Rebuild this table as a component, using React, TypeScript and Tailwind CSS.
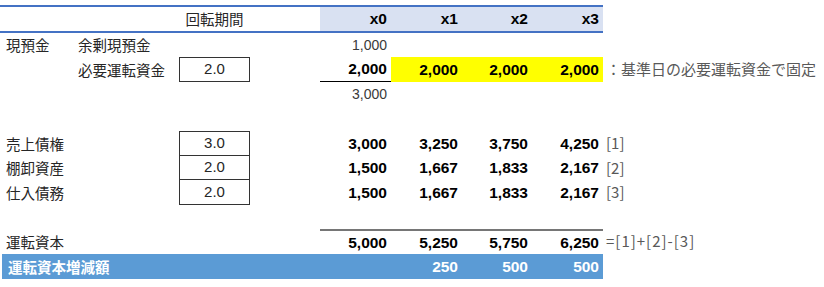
import type { ReactNode } from 'react';

const GRID =
  'grid grid-cols-[72px_107px_71px_70px_71px_71px_70px_71px_1fr] w-[824px]';
const JP = "font-['Noto_Sans_CJK_JP',sans-serif]";
const NUM = "font-['Liberation_Sans','Noto_Sans_CJK_JP',sans-serif]";

type Cell = ReactNode;

function Label({ children, white }: { children?: ReactNode; white?: boolean }) {
  return (
    <div
      className={`${JP} flex items-center pl-[6px] whitespace-nowrap text-[14.5px] ${
        white ? 'text-white font-bold' : 'text-[#262626]'
      }`}
    >
      {children}
    </div>
  );
}

function Num({
  children,
  bold = true,
  className = '',
}: {
  children?: ReactNode;
  bold?: boolean;
  className?: string;
}) {
  return (
    <div
      className={`${NUM} flex items-center justify-end pr-[4px] ${
        bold ? 'font-bold text-[15.5px] text-black' : 'text-[14px] text-[#3a3a3a]'
      } ${className}`}
    >
      {children}
    </div>
  );
}

function Box({ children, first }: { children: ReactNode; first?: boolean }) {
  return (
    <div
      className={`${NUM} flex items-center justify-center border-x border-b border-[#333] text-[15px] text-[#262626] ${
        first ? 'border-t' : ''
      }`}
    >
      {children}
    </div>
  );
}

function Note({ children, wide }: { children?: ReactNode; wide?: boolean }) {
  return (
    <div
      className={`${JP} flex items-center pl-[3px] whitespace-nowrap text-[15px] text-[#595959] ${
        wide ? 'tracking-[1px]' : ''
      }`}
    >
      {children}
    </div>
  );
}

function Row({ h, cells, className = '' }: { h: string; cells: Cell[]; className?: string }) {
  return (
    <div className={`${GRID} ${h} ${className}`}>
      {cells.map((c, i) => (
        <div key={i} className="contents">
          {c ?? <div />}
        </div>
      ))}
    </div>
  );
}

const ITEMS = [
  { label: '売上債権', turn: '3.0', vals: ['3,000', '3,250', '3,750', '4,250'], note: '[1]' },
  { label: '棚卸資産', turn: '2.0', vals: ['1,500', '1,667', '1,833', '2,167'], note: '[2]' },
  { label: '仕入債務', turn: '2.0', vals: ['1,500', '1,667', '1,833', '2,167'], note: '[3]' },
];

export default function App() {
  return (
    <div className="w-[824px] h-[287px] bg-white pt-[5px] overflow-hidden">
      {/* header */}
      <div className="w-[603px] border-y-2 border-[#4472c4]">
        <div className="grid grid-cols-[72px_107px_71px_70px_71px_71px_70px_71px] h-[24px]">
          <div />
          <div />
          <div className={`${JP} flex items-center justify-center text-[14.5px] text-[#262626]`}>
            回転期間
          </div>
          <div />
          {['x0', 'x1', 'x2', 'x3'].map((x) => (
            <Num key={x} className="bg-[#d9e1f2]">
              {x}
            </Num>
          ))}
        </div>
      </div>

      <Row
        h="h-[24px]"
        cells={[
          <Label>現預金</Label>,
          <Label>余剰現預金</Label>,
          null,
          null,
          <Num bold={false}>1,000</Num>,
        ]}
      />
      <Row
        h="h-[25px]"
        cells={[
          null,
          <Label>必要運転資金</Label>,
          <Box first>2.0</Box>,
          null,
          <Num className="border-b border-black">2,000</Num>,
          <Num className="bg-[#ffff00]">2,000</Num>,
          <Num className="bg-[#ffff00]">2,000</Num>,
          <Num className="bg-[#ffff00]">2,000</Num>,
          <Note>：基準日の必要運転資金で固定</Note>,
        ]}
      />
      <Row
        h="h-[24px]"
        cells={[null, null, null, null, <Num bold={false}>3,000</Num>]}
      />
      <div className="h-[25px]" />

      {ITEMS.map((it, i) => (
        <Row
          key={it.label}
          h={i === 1 ? 'h-[24px]' : 'h-[25px]'}
          cells={[
            <Label>{it.label}</Label>,
            null,
            <Box first={i === 0}>{it.turn}</Box>,
            null,
            ...it.vals.map((v) => <Num>{v}</Num>),
            <Note>{it.note}</Note>,
          ]}
        />
      ))}
      <div className="h-[24px]" />

      <Row
        h="h-[25px]"
        cells={[
          <Label>運転資本</Label>,
          null,
          null,
          null,
          ...['5,000', '5,250', '5,750', '6,250'].map((v) => (
            <Num className="border-t-2 border-[#767676]">{v}</Num>
          )),
          <Note wide>=[1]+[2]-[3]</Note>,
        ]}
      />

      <div className="ml-[2px] w-[601px] h-[25px] bg-[#5b9bd5] grid grid-cols-[70px_107px_71px_70px_71px_71px_70px_71px]">
        <Label white>運転資本増減額</Label>
        <div />
        <div />
        <div />
        <div />
        {['250', '500', '500'].map((v, i) => (
          <div
            key={i}
            className={`${NUM} flex items-center justify-end pr-[4px] font-bold text-[15.5px] text-white`}
          >
            {v}
          </div>
        ))}
      </div>
    </div>
  );
}
